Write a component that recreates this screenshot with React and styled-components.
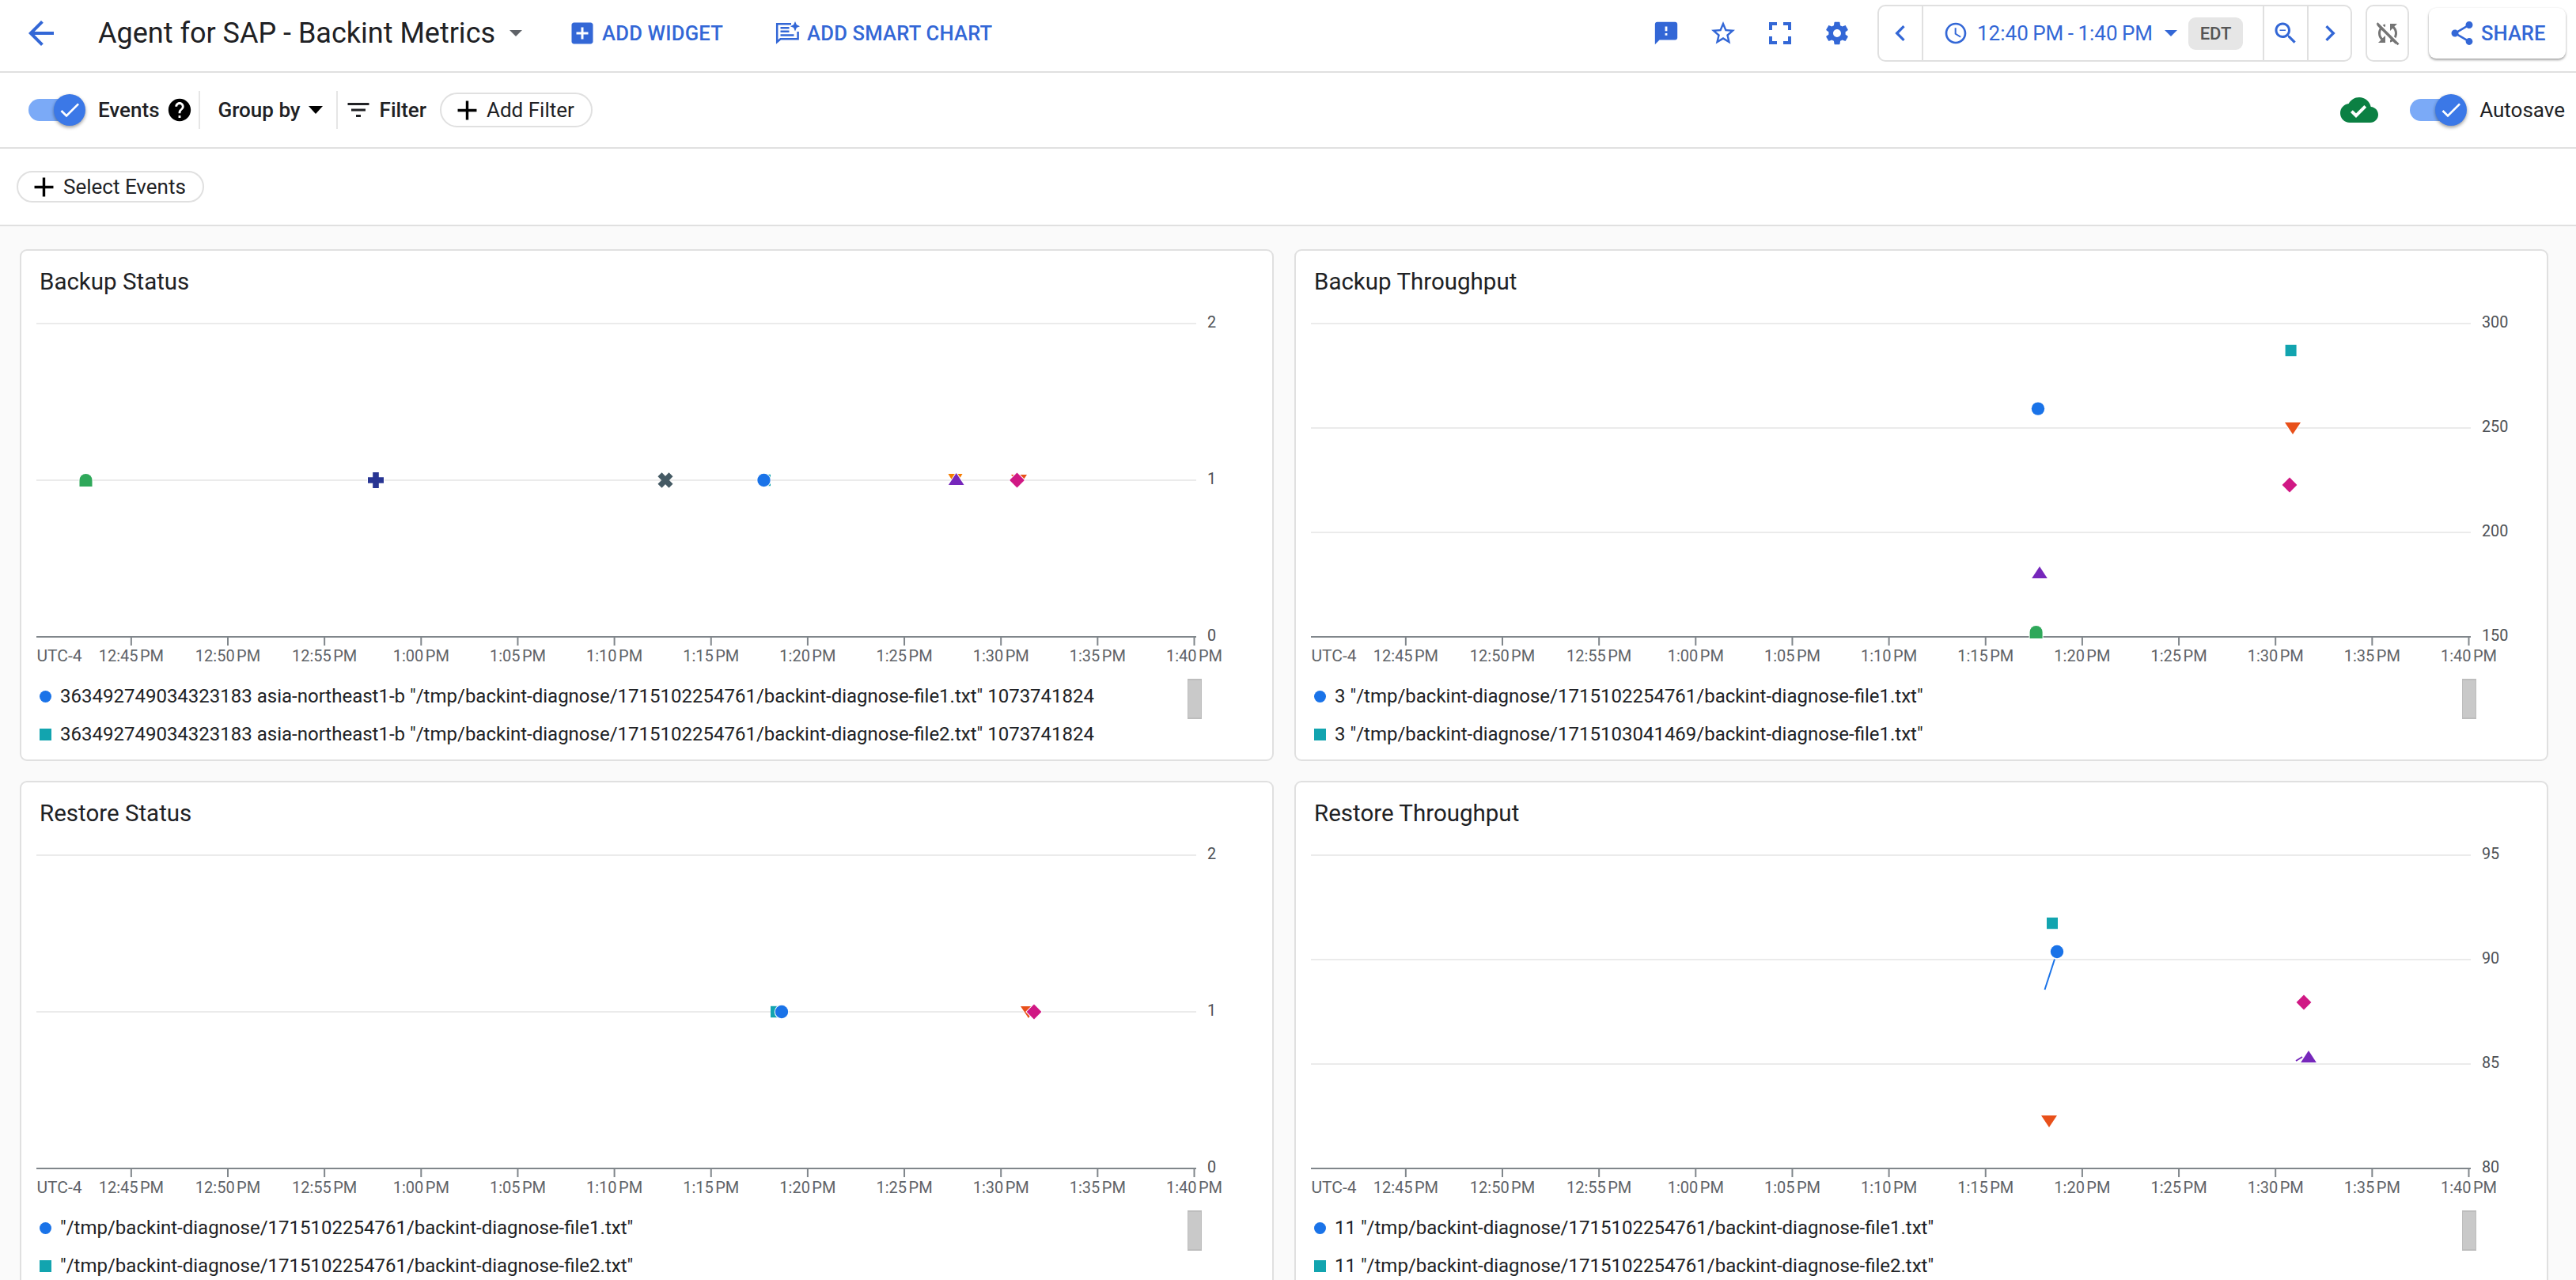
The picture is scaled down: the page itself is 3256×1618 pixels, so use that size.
import React from 'react';
import styled, { createGlobalStyle } from 'styled-components';

const BLUE = '#3367d6';
const Global = createGlobalStyle`
  html, body { margin: 0; padding: 0; height: 100%; overflow: hidden; background: #fafafa; }
  body { font-family: Roboto, "Liberation Sans", sans-serif; color: #202124; }
  * { box-sizing: border-box; }
`;

const Page = styled.div`height: 1618px; overflow: hidden; display: flex; flex-direction: column;`;
const TopBar = styled.header`
  flex: none; height: 92px; display: flex; align-items: center; background: #fff;
  border-bottom: 2px solid #e0e0e0; padding: 0 13px 6px 28px;
`;
const Bar = styled.div`
  flex: none; height: ${p => p.$h}px; display: flex; align-items: center; background: #fff;
  border-bottom: 2px solid #e0e0e0; padding: 0 14px 0 ${p => p.$pl}px;
`;
const Ic = styled.svg`flex: none; display: block; fill: ${p => p.$c || BLUE}; margin-left: ${p => p.$ml || 0}px; margin-right: ${p => p.$mr || 0}px;`;
const Icon = ({ d, s = 36, c, ml, mr, children }) => (
  <Ic width={s} height={s} viewBox="0 0 24 24" $c={c} $ml={ml} $mr={mr}><path d={d} />{children}</Ic>
);
const Title = styled.h1`margin: 0 0 0 48px; font-size: 36px; font-weight: 400; color: #202124; white-space: nowrap; line-height: 48px;`;
const Caret = styled.span`
  flex: none; width: 0; height: 0; margin-left: ${p => p.$ml}px;
  border-left: ${p => p.$w}px solid transparent; border-right: ${p => p.$w}px solid transparent;
  border-top: ${p => p.$h}px solid ${p => p.$c};
`;
const ActionLink = styled.a`
  display: flex; align-items: center; color: ${BLUE}; font-size: 25.6px; font-weight: 500; letter-spacing: .2px;
  margin-left: ${p => p.$ml}px; white-space: nowrap;
`;
const ActionText = styled.span`margin-left: ${p => p.$ml}px;`;
const RightGroup = styled.div`margin-left: auto; display: flex; align-items: center;`;
const IconButton = styled.div`width: 72px; height: 48px; display: flex; align-items: center; justify-content: center;`;
const Framed = styled.div`
  height: 72px; display: flex; align-items: stretch; border: 2px solid #e0e0e0; border-radius: 10px;
  margin-left: ${p => p.$ml}px; background: #fff;
`;
const Cell = styled.div`
  display: flex; align-items: center; justify-content: center; width: ${p => p.$w}px;
  border-left: ${p => p.$sep ? '2px solid #e0e0e0' : 'none'};
`;
const TimeCell = styled.div`
  display: flex; align-items: center; width: 431px; padding-left: 25px;
  border-left: 2px solid #e0e0e0; color: ${BLUE}; font-size: 26px; white-space: nowrap;
`;
const TimeText = styled.span`margin-left: 11px; width: 222px; word-spacing: -1px;`;
const Chip = styled.span`
  margin-left: 14px; width: 69px; height: 41px; border-radius: 9px; background: #e6e6e6; color: #555;
  font-size: 22px; font-weight: 500; display: flex; align-items: center; justify-content: center;
`;
const ShareBtn = styled.div`
  display: flex; align-items: center; height: 64px; width: 173px; margin-left: 25px; padding-left: 24px; border-radius: 9px;
  background: #fff; box-shadow: 0 2px 3px rgba(0,0,0,.35), 0 0 2px rgba(0,0,0,.08); color: ${BLUE}; font-size: 25.6px; font-weight: 500;
`;
const ShareText = styled.span`margin-left: 6px;`;
const ToggleWrap = styled.div`position: relative; width: 72px; height: 40px; flex: none;`;
const Track = styled.div`position: absolute; left: 0; top: 6px; width: 52px; height: 28px; border-radius: 14px; background: #7baaf7;`;
const Thumb = styled.div`
  position: absolute; right: 0; top: 0; width: 40px; height: 40px; border-radius: 50%; background: #3b78e7;
  box-shadow: 0 2px 4px rgba(0,0,0,.4); display: flex; align-items: center; justify-content: center;
`;
const Toggle = () => (
  <ToggleWrap><Track /><Thumb><Icon d={P.check} s={32} c="#fff" /></Thumb></ToggleWrap>
);
const Label = styled.span`
  font-size: 26px; font-weight: ${p => p.$w || 400}; color: #202124; white-space: nowrap; margin-left: ${p => p.$ml || 0}px;
`;
const Divider = styled.span`flex: none; width: 2px; height: 48px; background: #e6e6e6; margin-left: ${p => p.$ml}px;`;
const Pill = styled.div`
  display: flex; align-items: center; height: ${p => p.$h}px; border: 2px solid #e0e0e0; border-radius: 22px; background: #fff;
  padding: 0 21px 0 12px; margin-left: ${p => p.$ml || 0}px; font-size: 26px; white-space: nowrap;
`;
const PillText = styled.span`margin-left: 4px;`;
const Spacer = styled.div`margin-left: auto; display: flex; align-items: center;`;

const Grid = styled.main`
  flex: 1; display: grid; grid-template-columns: 1585px 1585px; grid-auto-rows: 647px; gap: 25px 26px; padding: 29px 0 0 25px; background: #fafafa;
`;
const Card = styled.section`background: #fff; border: 2px solid #e0e0e0; border-radius: 9px; position: relative;`;
const CardTitle = styled.h2`margin: 0; padding-left: 23px; height: 76px; line-height: 78px; font-size: 29.5px; font-weight: 400; color: #202124;`;
const ChartSvg = styled.svg`display: block; font-family: Roboto, sans-serif;`;
const Legend = styled.div`position: relative; padding: 11px 0 0 23px;`;
const LegendRow = styled.div`display: flex; align-items: center; height: 48px; font-size: 24px; color: #202124; white-space: nowrap;`;
const Swatch = styled.span`
  flex: none; width: 15px; height: 15px; margin-right: 11px; background: ${p => p.$c};
  border-radius: ${p => p.$round ? '50%' : '0'};
`;
const ScrollThumb = styled.div`
  position: absolute; left: 1474px; top: 13px; width: 18px; height: 51px; background: #c9c9c9; border: 1px solid #bdbdbd; border-top-width: 2px; border-bottom-width: 2px;
`;

const P = {
  back: 'M20 11H7.83l5.59-5.59L12 4l-8 8 8 8 1.41-1.41L7.83 13H20v-2z',
  addBox: 'M19 3H5c-1.11 0-2 .9-2 2v14c0 1.1.89 2 2 2h14c1.1 0 2-.9 2-2V5c0-1.1-.9-2-2-2zm-2 10h-4v4h-2v-4H7v-2h4V7h2v4h4v2z',
  feedback: 'M20 2H4c-1.1 0-1.99.9-1.99 2L2 22l4-4h14c1.1 0 2-.9 2-2V4c0-1.1-.9-2-2-2zm-7 12h-2v-2h2v2zm0-4h-2V6h2v4z',
  star: 'M22 9.24l-7.19-.62L12 2 9.19 8.63 2 9.24l5.46 4.73L5.82 21 12 17.27 18.18 21l-1.63-7.03L22 9.24zM12 15.4l-3.76 2.27 1-4.28-3.32-2.88 4.38-.38L12 6.1l1.71 4.04 4.38.38-3.32 2.88 1 4.28L12 15.4z',
  full: 'M7 14H5v5h5v-2H7v-3zm-2-4h2V7h3V5H5v5zm12 7h-3v2h5v-5h-2v3zM14 5v2h3v3h2V5h-5z',
  gear: 'M19.43 12.98c.04-.32.07-.64.07-.98s-.03-.66-.07-.98l2.11-1.65c.19-.15.24-.42.12-.64l-2-3.46c-.12-.22-.39-.3-.61-.22l-2.49 1c-.52-.4-1.08-.73-1.69-.98l-.38-2.65C14.46 2.18 14.25 2 14 2h-4c-.25 0-.46.18-.49.42l-.38 2.65c-.61.25-1.17.59-1.69.98l-2.49-1c-.23-.09-.49 0-.61.22l-2 3.46c-.13.22-.07.49.12.64l2.11 1.65c-.04.32-.07.65-.07.98s.03.66.07.98l-2.11 1.65c-.19.15-.24.42-.12.64l2 3.46c.12.22.39.3.61.22l2.49-1c.52.4 1.08.73 1.69.98l.38 2.65c.03.24.24.42.49.42h4c.25 0 .46-.18.49-.42l.38-2.65c.61-.25 1.17-.59 1.69-.98l2.49 1c.23.09.49 0 .61-.22l2-3.46c.12-.22.07-.49-.12-.64l-2.11-1.65zM12 15.5c-1.93 0-3.5-1.57-3.5-3.5s1.57-3.5 3.5-3.5 3.5 1.57 3.5 3.5-1.57 3.5-3.5 3.5z',
  chevL: 'M15.41 7.41L14 6l-6 6 6 6 1.41-1.41L10.83 12z',
  chevR: 'M10 6L8.59 7.41 13.17 12l-4.58 4.59L10 18l6-6z',
  clock: 'M11.99 2C6.47 2 2 6.48 2 12s4.47 10 9.99 10C17.52 22 22 17.52 22 12S17.52 2 11.99 2zM12 20c-4.42 0-8-3.58-8-8s3.58-8 8-8 8 3.58 8 8-3.58 8-8 8zm.5-13H11v6l5.25 3.15.75-1.23-4.5-2.67z',
  zoomOut: 'M15.5 14h-.79l-.28-.27C15.41 12.59 16 11.11 16 9.5 16 5.91 13.09 3 9.5 3S3 5.91 3 9.5 5.91 16 9.5 16c1.61 0 3.09-.59 4.23-1.57l.27.28v.79l5 4.99L20.49 19l-4.99-5zm-6 0C7.01 14 5 11.99 5 9.5S7.01 5 9.5 5 14 7.01 14 9.5 11.99 14 9.5 14zM7 9h5v1H7z',
  syncOff: 'M10 6.35V4.26c-.8.21-1.55.54-2.23.96l1.46 1.46c.25-.12.5-.24.77-.33zm-7.14-.94l2.36 2.36C4.45 8.99 4 10.44 4 12c0 2.21.91 4.2 2.36 5.64L4 20h6v-6l-2.24 2.24C6.68 15.15 6 13.66 6 12c0-1 .25-1.94.68-2.77l8.08 8.08c-.25.13-.5.25-.77.34v2.09c.8-.21 1.55-.54 2.23-.96l2.36 2.36 1.27-1.27L4.14 4.14 2.86 5.41zM20 4h-6v6l2.24-2.24C17.32 8.85 18 10.34 18 12c0 1-.25 1.94-.68 2.77l1.46 1.46C19.55 15.01 20 13.56 20 12c0-2.21-.91-4.2-2.36-5.64L20 4z',
  share: 'M18 16.08c-.76 0-1.44.3-1.96.77L8.91 12.7c.05-.23.09-.46.09-.7s-.04-.47-.09-.7l7.05-4.11c.54.5 1.25.81 2.04.81 1.66 0 3-1.34 3-3s-1.34-3-3-3-3 1.34-3 3c0 .24.04.47.09.7L8.04 9.81C7.5 9.31 6.79 9 6 9c-1.66 0-3 1.34-3 3s1.34 3 3 3c.79 0 1.5-.31 2.04-.81l7.12 4.16c-.05.21-.08.43-.08.65 0 1.61 1.31 2.92 2.92 2.92s2.92-1.31 2.92-2.92-1.31-2.92-2.92-2.92z',
  check: 'M9 16.17L4.83 12l-1.42 1.41L9 19 21 7l-1.41-1.41z',
  help: 'M12 2C6.48 2 2 6.48 2 12s4.48 10 10 10 10-4.48 10-10S17.52 2 12 2zm1 17h-2v-2h2v2zm2.07-7.75l-.9.92C13.45 12.9 13 13.5 13 15h-2v-.5c0-1.1.45-2.1 1.17-2.83l1.24-1.26c.37-.36.59-.86.59-1.41 0-1.1-.9-2-2-2s-2 .9-2 2H8c0-2.21 1.79-4 4-4s4 1.79 4 4c0 .88-.36 1.68-.93 2.25z',
  filter: 'M10 18h4v-2h-4v2zM3 6v2h18V6H3zm3 7h12v-2H6v2z',
  add: 'M19 13h-6v6h-2v-6H5v-2h6V5h2v6h6v2z',
  cloud: 'M19.35 10.04C18.67 6.59 15.64 4 12 4 9.11 4 6.6 5.64 5.35 8.04 2.34 8.36 0 10.91 0 14c0 3.31 2.69 6 6 6h13c2.76 0 5-2.24 5-5 0-2.64-2.05-4.78-4.65-4.96zM10 17l-3.5-3.5 1.41-1.41L10 14.17 15.18 9l1.41 1.41L10 17z',
};

const SmartChart = () => (
  <svg width="32" height="30" viewBox="0 0 32 30" style={{ flex: 'none', display: 'block' }} fill="none">
    <path d="M20 3.2H2.2V26L6.5 22.2H28.6V13" stroke={BLUE} strokeWidth="2.5" />
    <path d="M6.5 8.2h11M6.5 12.8h11M6.5 17.4h17" stroke={BLUE} strokeWidth="2.5" />
    <path d="M25 0l1.9 4.3L31 6.2l-4.1 1.9L25 12.4l-1.9-4.3L19 6.2l4.1-1.9z" fill={BLUE} />
  </svg>
);

const C = { circle: '#1a73e8', square: '#12a4af', down: '#e8501a', orange: '#f57c00', diamond: '#d01884', tri: '#7627bb', arch: '#2fa85a', plus: '#283593', x: '#455a64' };

const Marker = ({ k, x, y }) => {
  const halo = { stroke: '#fff', strokeWidth: 2, paintOrder: 'stroke' };
  switch (k) {
    case 'circle': return <circle cx={x} cy={y} r={8.2} fill={C.circle} {...halo} />;
    case 'square': return <rect x={x - 7} y={y - 7.2} width={14} height={14.4} fill={C.square} />;
    case 'down': return <polygon points={`${x - 10},${y - 7} ${x + 10},${y - 7} ${x},${y + 8}`} fill={C.down} {...halo} />;
    case 'orange': return <polygon points={`${x - 9},${y - 8} ${x + 9},${y - 8} ${x},${y + 7}`} fill={C.orange} />;
    case 'tri': return <polygon points={`${x},${y - 8} ${x + 9.8},${y + 7} ${x - 9.8},${y + 7}`} fill={C.tri} {...halo} />;
    case 'diamond': return <polygon points={`${x},${y - 9.6} ${x + 9.4},${y} ${x},${y + 9.6} ${x - 9.4},${y}`} fill={C.diamond} {...halo} />;
    case 'arch': return <path d={`M${x - 8} ${y + 8}V${y}a8 8 0 0 1 16 0V${y + 8}z`} fill={C.arch} {...halo} />;
    case 'plus': return <path d={`M${x - 3.8} ${y - 10}h7.6v6.2h6.2v7.6h-6.2v6.2h-7.6v-6.2h-6.2v-7.6h6.2z`} fill={C.plus} {...halo} />;
    case 'x': return <path d={`M${x - 7} ${y - 7.2}L${x + 7} ${y + 7.2}M${x + 7} ${y - 7.2}L${x - 7} ${y + 7.2}`} stroke={C.x} strokeWidth={7} fill="none" />;
    default: return null;
  }
};

const TIMES = ['12:45 PM', '12:50 PM', '12:55 PM', '1:00 PM', '1:05 PM', '1:10 PM', '1:15 PM', '1:20 PM', '1:25 PM', '1:30 PM', '1:35 PM', '1:40 PM'];

const Chart = ({ ox, oy, ylabels, marks, extra }) => {
  const L = ox + 21, R = ox + 1487, T = oy + 94, B = oy + 490;
  const n = ylabels.length - 1;
  return (
    <ChartSvg width="1581" height="452" viewBox={`${ox + 2} ${oy + 78} 1581 452`}>
      {ylabels.map((lab, i) => {
        const y = T + (B - T) * i / n;
        return (
          <g key={lab}>
            {i < n && <line x1={L} x2={R} y1={y} y2={y} stroke="#ebebeb" strokeWidth="2" />}
            <text x={ox + 1501} y={y + 5} fontSize="19.8" fill="#4d5156">{lab}</text>
          </g>
        );
      })}
      <line x1={L} x2={R} y1={B} y2={B} stroke="#80868b" strokeWidth="2" />
      <text x={L + 0.5} y={B + 31} fontSize="21" fill="#5f6368">UTC-4</text>
      {TIMES.map((t, i) => {
        const x = ox + 1484.5 - (11 - i) * 122.15;
        return (
          <g key={t}>
            <line x1={x} x2={x} y1={B} y2={B + 11} stroke="#80868b" strokeWidth="2" />
            <text x={x} y={B + 31} textAnchor="middle" fontSize="20" wordSpacing="-2.5" fill="#5f6368">{t}</text>
          </g>
        );
      })}
      {extra}
      {marks.map((m, i) => <Marker key={i} {...m} />)}
    </ChartSvg>
  );
};

const pre1 = '363492749034323183 asia-northeast1-b ';
const f = (id, n) => `"/tmp/backint-diagnose/${id}/backint-diagnose-file${n}.txt"`;
const A = '1715102254761', B2 = '1715103041469';

const CARDS = [
  {
    title: 'Backup Status', ox: 25, oy: 315, ylabels: ['2', '1', '0'],
    legend: [`${pre1}${f(A, 1)} 1073741824`, `${pre1}${f(A, 2)} 1073741824`],
    marks: [
      { k: 'arch', x: 108.5, y: 607 }, { k: 'plus', x: 475, y: 607 }, { k: 'x', x: 841, y: 607 },
      { k: 'square', x: 967, y: 607 }, { k: 'circle', x: 965.5, y: 607 },
      { k: 'orange', x: 1207.5, y: 607 }, { k: 'tri', x: 1208.7, y: 606 },
      { k: 'down', x: 1288, y: 607 }, { k: 'diamond', x: 1285.5, y: 607 },
    ],
  },
  {
    title: 'Backup Throughput', ox: 1636, oy: 315, ylabels: ['300', '250', '200', '150'],
    legend: [`3 ${f(A, 1)}`, `3 ${f(B2, 1)}`],
    marks: [
      { k: 'circle', x: 2576, y: 516.6 }, { k: 'square', x: 2895.6, y: 443 }, { k: 'down', x: 2898, y: 541 },
      { k: 'diamond', x: 2894, y: 613 }, { k: 'tri', x: 2578, y: 724 }, { k: 'arch', x: 2573.6, y: 799 },
    ],
  },
  {
    title: 'Restore Status', ox: 25, oy: 987, ylabels: ['2', '1', '0'],
    legend: [f(A, 1), f(A, 2)],
    marks: [
      { k: 'square', x: 981, y: 1279 }, { k: 'circle', x: 988, y: 1279 },
      { k: 'down', x: 1300, y: 1279 }, { k: 'diamond', x: 1307, y: 1279 },
    ],
  },
  {
    title: 'Restore Throughput', ox: 1636, oy: 987, ylabels: ['95', '90', '85', '80'],
    legend: [`11 ${f(A, 1)}`, `11 ${f(A, 2)}`],
    extra: <>
      <line x1="2584.5" y1="1251" x2="2597" y2="1212.5" stroke={C.circle} strokeWidth="2" />
      <line x1="2902" y1="1341" x2="2910" y2="1336" stroke={C.tri} strokeWidth="2" />
    </>,
    marks: [
      { k: 'square', x: 2594, y: 1167 }, { k: 'circle', x: 2600, y: 1203 }, { k: 'diamond', x: 2912, y: 1267 },
      { k: 'tri', x: 2918, y: 1336 }, { k: 'down', x: 2590, y: 1417 },
    ],
  },
];

export default function App() {
  return (
    <Page>
      <Global />
      <TopBar>
        <Icon d={P.back} s={48} />
        <Title>Agent for SAP - Backint Metrics</Title>
        <Caret $ml={18} $w={8} $h={8} $c="#5f6368" />
        <ActionLink $ml={58}><Icon d={P.addBox} s={36} /><ActionText $ml={7}>ADD WIDGET</ActionText></ActionLink>
        <ActionLink $ml={66}><SmartChart /><ActionText $ml={8}>ADD SMART CHART</ActionText></ActionLink>
        <RightGroup>
          <IconButton><Icon d={P.feedback} s={34} /></IconButton>
          <IconButton><Icon d={P.star} s={36} /></IconButton>
          <IconButton><Icon d={P.full} s={48} /></IconButton>
          <IconButton><Icon d={P.gear} s={34} /></IconButton>
          <Framed $ml={15}>
            <Cell $w={54}><Icon d={P.chevL} s={40} /></Cell>
            <TimeCell>
              <Icon d={P.clock} s={32} />
              <TimeText>12:40 PM - 1:40 PM</TimeText>
              <Caret $ml={15} $w={8} $h={8} $c={BLUE} />
              <Chip>EDT</Chip>
            </TimeCell>
            <Cell $w={56} $sep><Icon d={P.zoomOut} s={36} /></Cell>
            <Cell $w={55} $sep><Icon d={P.chevR} s={40} /></Cell>
          </Framed>
          <Framed $ml={17}>
            <Cell $w={51}>
              <Icon d={P.syncOff} s={36} c="#757575">
                <line x1="3" y1="3.5" x2="21" y2="21.5" stroke="#757575" strokeWidth="1.8" />
              </Icon>
            </Cell>
          </Framed>
          <ShareBtn><Icon d={P.share} s={36} /><ShareText>SHARE</ShareText></ShareBtn>
        </RightGroup>
      </TopBar>
      <Bar $h={96} $pl={36}>
        <Toggle />
        <Label $w={500} $ml={16}>Events</Label>
        <Icon d={P.help} s={34} c="#000" ml={8} />
        <Divider $ml={7} />
        <Label $w={500} $ml={23}>Group by</Label>
        <Caret $ml={10} $w={9.5} $h={10} $c="#000" />
        <Divider $ml={17} />
        <Icon d={P.filter} s={36} c="#202124" ml={8} />
        <Label $w={500} $ml={9}>Filter</Label>
        <Pill $h={44} $ml={17}><Icon d={P.add} s={41} c="#000" /><PillText>Add Filter</PillText></Pill>
        <Spacer>
          <Icon d={P.cloud} s={48} c="#0b8043" mr={40} />
          <Toggle />
          <Label $ml={16}>Autosave</Label>
        </Spacer>
      </Bar>
      <Bar $h={98} $pl={21}>
        <Pill $h={40}><Icon d={P.add} s={41} c="#000" /><PillText>Select Events</PillText></Pill>
      </Bar>
      <Grid>
        {CARDS.map(card => (
          <Card key={card.title}>
            <CardTitle>{card.title}</CardTitle>
            <Chart {...card} />
            <Legend>
              <LegendRow><Swatch $c={C.circle} $round />{card.legend[0]}</LegendRow>
              <LegendRow><Swatch $c={C.square} />{card.legend[1]}</LegendRow>
              <ScrollThumb />
            </Legend>
          </Card>
        ))}
      </Grid>
    </Page>
  );
}
